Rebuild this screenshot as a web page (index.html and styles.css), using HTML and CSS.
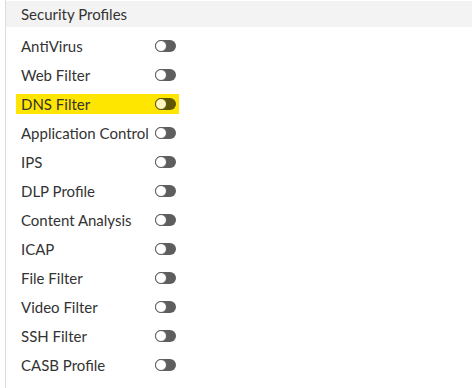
FILE: index.html
```html
<!DOCTYPE html>
<html lang="en">
<head>
    <meta charset="UTF-8">
    <title>Security Profiles</title>
    <link rel="stylesheet" href="styles.css">
</head>
<body>
    <div class="panel">
        <div class="panel-header">Security Profiles</div>
        <ul class="profile-list">
            <li class="profile-row"><span class="profile-name">AntiVirus</span><span class="toggle"></span></li>
            <li class="profile-row"><span class="profile-name">Web Filter</span><span class="toggle"></span></li>
            <li class="profile-row highlight"><span class="profile-name">DNS Filter</span><span class="toggle"></span></li>
            <li class="profile-row"><span class="profile-name">Application Control</span><span class="toggle"></span></li>
            <li class="profile-row"><span class="profile-name">IPS</span><span class="toggle"></span></li>
            <li class="profile-row"><span class="profile-name">DLP Profile</span><span class="toggle"></span></li>
            <li class="profile-row"><span class="profile-name">Content Analysis</span><span class="toggle"></span></li>
            <li class="profile-row"><span class="profile-name">ICAP</span><span class="toggle"></span></li>
            <li class="profile-row"><span class="profile-name">File Filter</span><span class="toggle"></span></li>
            <li class="profile-row"><span class="profile-name">Video Filter</span><span class="toggle"></span></li>
            <li class="profile-row"><span class="profile-name">SSH Filter</span><span class="toggle"></span></li>
            <li class="profile-row"><span class="profile-name">CASB Profile</span><span class="toggle"></span></li>
        </ul>
    </div>
</body>
</html>
```

FILE: styles.css
```css
body {
    margin: 0;
    font-family: Lato, 'Open Sans', sans-serif;
    background-color: white;
    color: #333;
}

.panel {
    margin-left: 5px;
    border-left: 1px solid #dcdcdc;
    min-height: 388px;
    padding-top: 1px;
    box-sizing: border-box;
}

.panel-header {
    background-color: #f3f3f3;
    height: 26px;
    line-height: 26px;
    padding-left: 15px;
    font-size: 15px;
}

.profile-list {
    list-style: none;
    margin: 0;
    padding: 9px 0 0 10px;
}

.profile-row {
    display: flex;
    align-items: center;
    width: 163px;
    height: 20px;
    margin-bottom: 9px;
    font-size: 15px;
    padding-left: 5px;
    box-sizing: border-box;
}

.profile-name {
    width: 134px;
    white-space: nowrap;
}

.toggle {
    position: relative;
    flex-shrink: 0;
    width: 21px;
    height: 12px;
    border-radius: 6px;
    background-color: #5e5e5e;
}

.toggle::before {
    content: "";
    position: absolute;
    left: 0;
    top: 0;
    width: 10px;
    height: 10px;
    border-radius: 50%;
    border: 1px solid #5e5e5e;
    background-color: white;
}

.highlight {
    background-color: #ffe600;
}

.highlight .toggle {
    background-color: #5e5600;
}

.highlight .toggle::before {
    border-color: #5e5600;
    background-color: #fff9c0;
}
```
